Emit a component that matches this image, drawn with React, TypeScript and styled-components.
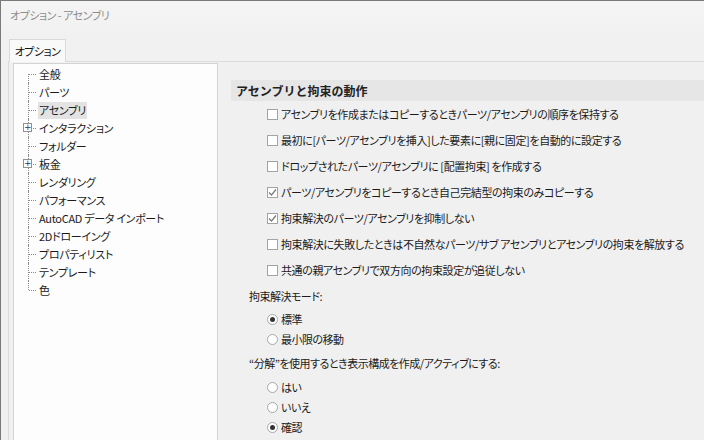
import React from 'react';
import styled, {createGlobalStyle} from 'styled-components';

const GlobalStyle = createGlobalStyle`
  body {
    margin: 0;
    background: #f0f0f0;
    font-family: "Noto Sans CJK JP", "Noto Sans", sans-serif;
    font-size: 11px;
    letter-spacing: -0.5px;
    font-feature-settings: "palt";
    color: #1b1b1b;
  }
`

type TreeItem = {
    label: string
    expandable?: boolean
    selected?: boolean
}

const treeItems: TreeItem[] = [
    {label: '全般'},
    {label: 'パーツ'},
    {label: 'アセンブリ', selected: true},
    {label: 'インタラクション', expandable: true},
    {label: 'フォルダー'},
    {label: '板金', expandable: true},
    {label: 'レンダリング'},
    {label: 'パフォーマンス'},
    {label: 'AutoCAD データ インポート'},
    {label: '2Dドローイング'},
    {label: 'プロパティリスト'},
    {label: 'テンプレート'},
    {label: '色'},
]

const checkOptions = [
    {label: 'アセンブリを作成またはコピーするときパーツ/アセンブリの順序を保持する', checked: false},
    {label: '最初に[パーツ/アセンブリを挿入]した要素に[親に固定]を自動的に設定する', checked: false},
    {label: 'ドロップされたパーツ/アセンブリに [配置拘束] を作成する', checked: false},
    {label: 'パーツ/アセンブリをコピーするとき自己完結型の拘束のみコピーする', checked: true},
    {label: '拘束解決のパーツ/アセンブリを抑制しない', checked: true},
    {label: '拘束解決に失敗したときは不自然なパーツ/サブ アセンブリとアセンブリの拘束を解放する', checked: false},
    {label: '共通の親アセンブリで双方向の拘束設定が追従しない', checked: false},
]

function CheckRow(props: {label: string, checked: boolean}) {
    return (
        <OptionRow>
            <CheckBox>
                {props.checked && (
                    <svg width="9" height="9" viewBox="0 0 9 9">
                        <polyline points="1,4.5 3.5,7 8,1.5" fill="none" stroke="#7b7b7b" strokeWidth="1.3"/>
                    </svg>
                )}
            </CheckBox>
            <span>{props.label}</span>
        </OptionRow>
    )
}

function RadioRow(props: {label: string, checked?: boolean}) {
    return (
        <RadioLine>
            <Radio checked={!!props.checked}/>
            <span>{props.label}</span>
        </RadioLine>
    )
}

function App() {
    return (
        <>
            <GlobalStyle/>
            <Window>
                <TitleBar>オプション - アセンブリ</TitleBar>
                <TabStrip>
                    <Tab>オプション</Tab>
                </TabStrip>
                <TabPage>
                    <Tree>
                        {treeItems.map((item, i) => (
                            <TreeRow key={item.label} last={i === treeItems.length - 1}>
                                {item.expandable && <Expander>+</Expander>}
                                <TreeLabel selected={!!item.selected}>{item.label}</TreeLabel>
                            </TreeRow>
                        ))}
                    </Tree>
                    <Settings>
                        <SectionHeader>アセンブリと拘束の動作</SectionHeader>
                        {checkOptions.map(o => <CheckRow key={o.label} label={o.label} checked={o.checked}/>)}
                        <GroupLabel>拘束解決モード:</GroupLabel>
                        <RadioRow label="標準" checked/>
                        <RadioRow label="最小限の移動"/>
                        <GroupLabel tall>“分解”を使用するとき表示構成を作成/アクティブにする:</GroupLabel>
                        <RadioRow label="はい"/>
                        <RadioRow label="いいえ"/>
                        <RadioRow label="確認" checked/>
                    </Settings>
                </TabPage>
            </Window>
        </>
    );
}

const Window = styled.div`
  width: 704px;
  height: 440px;
  box-sizing: border-box;
  border-top: 1px solid #7a7a7a;
  border-left: 1px solid #7a7a7a;
  display: flex;
  flex-direction: column;
  overflow: hidden;
  background: #f0f0f0;
`

const TitleBar = styled.div`
  height: 38px;
  box-sizing: border-box;
  padding: 6px 0 0 9px;
  line-height: 16px;
  color: #8d8d8d;
  background: linear-gradient(#f4f4f4, #f1f1f1);
`

const TabStrip = styled.div`
  display: flex;
  padding-left: 8px;
  background: #f1f1f1;
`

const Tab = styled.div`
  position: relative;
  z-index: 1;
  width: 57px;
  height: 23px;
  box-sizing: border-box;
  margin-bottom: -1px;
  padding-top: 3px;
  border: 1px solid #d9d9d9;
  border-bottom: none;
  background: #f9f9f9;
  text-align: center;
  line-height: 16px;
  color: #111;
`

const TabPage = styled.div`
  flex: 1;
  display: flex;
  min-height: 0;
  margin-left: 7px;
  padding: 1px 0 0 4px;
  border-top: 1px solid #dcdcdc;
  border-left: 1px solid #dcdcdc;
`

const Tree = styled.div`
  flex: 0 0 205px;
  box-sizing: border-box;
  padding-top: 1px;
  border: 1px solid #d4d4d4;
  border-bottom: none;
  background: #fdfdfd;
`

const TreeRow = styled.div<{last: boolean}>`
  position: relative;
  height: 18px;
  padding-left: 24px;
  display: flex;
  align-items: center;

  &::before {
    content: "";
    position: absolute;
    left: 14px;
    top: 0;
    height: ${p => p.last ? '9px' : '18px'};
    border-left: 1px dotted #8a8a8a;
  }

  &::after {
    content: "";
    position: absolute;
    left: 15px;
    top: 9px;
    width: 7px;
    border-top: 1px dotted #8a8a8a;
  }

  &:first-child::before {
    top: 9px;
    height: 9px;
  }
`

const Expander = styled.span`
  position: absolute;
  z-index: 1;
  left: 9px;
  top: 4px;
  width: 9px;
  height: 9px;
  box-sizing: border-box;
  border: 1px solid #919191;
  background: #fff;
  font-family: "DejaVu Sans", sans-serif;
  font-size: 9px;
  letter-spacing: 0;
  line-height: 6px;
  text-align: center;
  color: #1c3a6b;
`

const TreeLabel = styled.span<{selected: boolean}>`
  padding: 0 1px;
  line-height: 17px;
  letter-spacing: -0.3px;
  background: ${p => p.selected ? '#e3e3e3' : 'transparent'};
  white-space: nowrap;
`

const Settings = styled.div`
  flex: 1;
  min-width: 0;
  overflow: hidden;
  padding: 17px 0 0 13px;
`

const SectionHeader = styled.div`
  height: 21px;
  padding-left: 5px;
  line-height: 21px;
  font-size: 12px;
  letter-spacing: 0;
  font-feature-settings: normal;
  font-weight: bold;
  color: #222;
  background: #e6e6e6;
`

const OptionRow = styled.div`
  height: 26px;
  display: flex;
  align-items: center;
  padding-left: 36px;
  white-space: nowrap;
  letter-spacing: -0.4px;
`

const CheckBox = styled.span`
  flex: none;
  width: 11px;
  height: 11px;
  box-sizing: border-box;
  margin-right: 3px;
  border: 1px solid #a3a3a3;
  background: #fff;
  display: flex;
  align-items: center;
  justify-content: center;
`

const GroupLabel = styled.div<{tall?: boolean}>`
  height: ${p => p.tall ? '28px' : '26px'};
  display: flex;
  align-items: center;
  padding-left: 18px;
  white-space: nowrap;
`

const RadioLine = styled.div`
  height: 20px;
  display: flex;
  align-items: center;
  padding-left: 36px;
`

const Radio = styled.span<{checked: boolean}>`
  flex: none;
  width: 11px;
  height: 11px;
  box-sizing: border-box;
  margin-right: 3px;
  border: 1px solid #a8a8a8;
  border-radius: 50%;
  background: #fff;
  display: flex;
  align-items: center;
  justify-content: center;

  &::after {
    content: "";
    width: 5px;
    height: 5px;
    border-radius: 50%;
    background: ${p => p.checked ? '#333' : 'transparent'};
  }
`

export default App;
